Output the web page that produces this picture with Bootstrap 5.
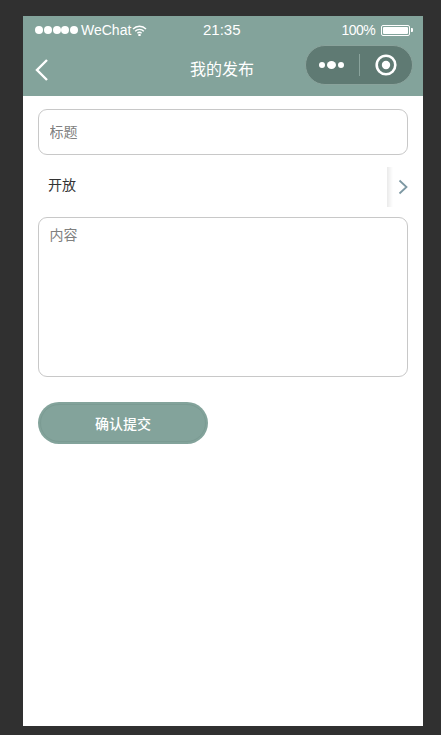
<!DOCTYPE html>
<html lang="zh">
<head>
<meta charset="utf-8">
<title>我的发布</title>
<link rel="stylesheet" href="https://cdn.jsdelivr.net/npm/bootstrap@5.3.0/dist/css/bootstrap.min.css">
<style>
html,body{height:100%;margin:0}
body.stage{background:#303030;padding:16px 18px 9px 23px;overflow:hidden;font-family:"Liberation Sans","Noto Sans CJK SC",sans-serif}
.phone{width:400px;height:710px;background:#fff}
.topbar{background:#83a39b;height:80px;color:#fff}
.statusrow{height:28px;padding:0 10px 0 12px;font-size:14px;position:relative}
.dots{gap:.75px}
.dots i{display:block;width:8px;height:8px;border-radius:50%;background:#fff}
.carrier{margin-left:3px}
.wifi{margin-left:1px}
.clock{position:absolute;left:180px;top:5px;font-size:15px;line-height:18px}
.pct{letter-spacing:-.6px}
.batt{width:29px;height:11px;border:1px solid #fff;border-radius:2px;padding:1px;margin-left:6px}
.batt b{display:block;height:100%;background:#fff;border-radius:1px}
.nub{width:2px;height:4px;background:#fff;border-radius:0 1px 1px 0;margin-left:1px}
.navrow{height:52px;padding:0 10px 0 11px;position:relative}
.navtitle{position:absolute;left:0;right:2px;top:16px;text-align:center;font-size:16px;line-height:20px}
.capsule{width:108px;height:40px;border-radius:20px;background:#5f7a73;border:1px solid #8aa39c;margin-top:-11px;margin-left:auto}
.cap-l{width:53px;gap:2px;padding-right:2px}
.cap-l i{display:block;border-radius:50%;background:#fff;width:6px;height:6px}
.cap-l i.mid{width:9px;height:8px}
.cap-sep{width:1px;height:22px;background:#8aa39c}
.cap-r{flex:1}
.formwrap{padding:13px 15px 0}
.fieldbox{border:1px solid #c8c8c8;border-radius:9px;font-size:14px;color:#333;box-shadow:none;padding:0 10.5px;font-family:inherit}
.fieldbox::placeholder{color:#808080;opacity:1}
.fieldbox:focus{border-color:#c8c8c8;box-shadow:none}
.titlebox{height:46px}
.pickrow{height:62px;font-size:14px;color:#333;padding-left:10px}
.picktext{margin-top:-2px}
.pickend{width:21px;height:40px;background:linear-gradient(90deg,#eaeaea,#fff 6px);margin-top:1px;padding-left:11px}
.bodybox{height:160px;resize:none;padding-top:8px;line-height:18px}
.sendbtn{width:170px;height:42px;margin-top:25px;border-radius:21px;background:#83a39b;border:0;color:#fff;font-size:14px;font-weight:500;padding:2px 0 0;display:block;outline:1px solid #7b9b93;outline-offset:-3px}
.sendbtn:hover{background:#83a39b;color:#fff}
</style>
</head>
<body class="stage">
<div class="phone d-flex flex-column">
  <header class="topbar">
    <div class="statusrow d-flex align-items-center">
      <span class="dots d-flex"><i></i><i></i><i></i><i></i><i></i></span>
      <span class="carrier">WeChat</span>
      <svg class="wifi" width="15" height="11" viewBox="0 0 15 11" fill="none" stroke="#fff" stroke-width="1.4"><path d="M1 4a9 9 0 0 1 13 0M3.2 6.2a6 6 0 0 1 8.6 0M5.4 8.2a3 3 0 0 1 4.2 0"/><circle cx="7.5" cy="10" r=".6" fill="#fff"/></svg>
      <span class="clock">21:35</span>
      <span class="ms-auto pct">100%</span>
      <span class="batt"><b></b></span><span class="nub"></span>
    </div>
    <div class="navrow d-flex align-items-center">
      <svg width="15" height="24" viewBox="0 0 15 24" fill="none" stroke="#fff" stroke-width="2.4"><path d="M13 2 3 12l10 10"/></svg>
      <div class="navtitle">我的发布</div>
      <div class="capsule d-flex align-items-center">
        <div class="cap-l d-flex align-items-center justify-content-center"><i></i><i class="mid"></i><i></i></div>
        <div class="cap-sep"></div>
        <div class="cap-r d-flex align-items-center justify-content-center">
          <svg width="22" height="22" viewBox="0 0 22 22"><circle cx="11" cy="11" r="9.3" fill="none" stroke="#fff" stroke-width="2.6"/><circle cx="11" cy="11" r="4.2" fill="#fff"/></svg>
        </div>
      </div>
    </div>
  </header>
  <form class="formwrap">
    <input class="form-control fieldbox titlebox" type="text" placeholder="标题">
    <div class="pickrow d-flex align-items-center justify-content-between">
      <span class="picktext">开放</span>
      <div class="pickend d-flex align-items-center">
        <svg width="10" height="16" viewBox="0 0 10 16" fill="none" stroke="#7d98a3" stroke-width="1.8"><path d="m1.5 1.5 7 6.5-7 6.5"/></svg>
      </div>
    </div>
    <textarea class="form-control fieldbox bodybox" placeholder="内容"></textarea>
    <button type="button" class="btn sendbtn">确认提交</button>
  </form>
</div>
<script src="https://cdn.jsdelivr.net/npm/bootstrap@5.3.0/dist/js/bootstrap.bundle.min.js"></script>
</body>
</html>
